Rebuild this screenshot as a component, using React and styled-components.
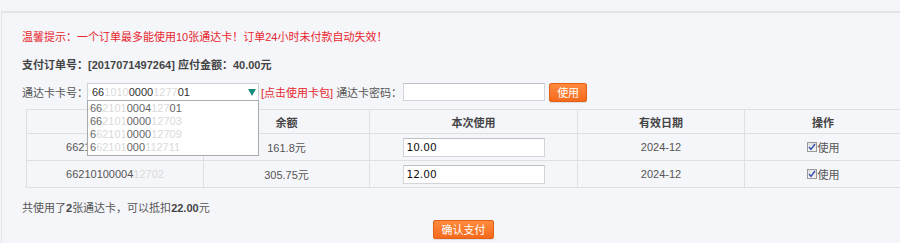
import React from "react";
import styled, { createGlobalStyle } from "styled-components";

const Global = createGlobalStyle`
  html, body { margin: 0; padding: 0; background: #f5f6fa; overflow: hidden; }
  body { font-family: "Liberation Sans", "Noto Sans CJK SC", sans-serif; font-size: 11px; color: #555; }
`;

const Page = styled.div`
  width: 900px;
  height: 243px;
  padding-top: 11px;
  box-sizing: border-box;
  overflow: hidden;
`;

const Panel = styled.div`
  margin-left: 1px;
  width: 960px;
  height: 240px;
  border-top: 2px solid #e3e4e8;
  border-left: 1px solid #e3e4e8;
  padding: 14px 0 0 20px;
  box-sizing: border-box;
`;

const Notice = styled.div`
  color: #e8262d;
  line-height: 20px;
`;

const OrderLine = styled.div`
  margin-top: 8px;
  line-height: 20px;
  font-weight: bold;
  color: #444;
`;

const CardRow = styled.div`
  margin-top: 8px;
  display: flex;
  align-items: center;
  height: 18px;
  position: relative;
  z-index: 2;
`;

const Label = styled.span`
  color: #555;
  white-space: nowrap;
  margin-left: ${(p) => p.$ml || 0}px;
`;

const SelectBox = styled.div`
  position: relative;
  margin-left: -1px;
  width: 172px;
  height: 18px;
  box-sizing: border-box;
  background: #fff;
  border: 1px solid #cfd0d4;
  display: flex;
  align-items: center;
  padding-left: 4px;
  color: #333;
`;

const Arrow = styled.span`
  position: absolute;
  right: 2px;
  top: 5px;
  width: 0;
  height: 0;
  border-left: 4px solid transparent;
  border-right: 4px solid transparent;
  border-top: 7px solid #1b8b80;
`;

const Faint = styled.span`
  color: #dadada;
`;

const Dropdown = styled.div`
  position: absolute;
  left: -1px;
  top: 16px;
  width: 172px;
  height: 56px;
  box-sizing: border-box;
  background: #fff;
  border: 1px solid #a9aaae;
  padding: 1px 0 0 2px;
  overflow: hidden;
`;

const DropItem = styled.div`
  line-height: 13px;
  color: #666;
`;

const WalletLink = styled.span`
  color: #e8262d;
  margin-left: 2px;
  white-space: nowrap;
`;

const TextBox = styled.div`
  width: ${(p) => p.$w}px;
  height: ${(p) => p.$h}px;
  box-sizing: border-box;
  background: #fff;
  border: 1px solid #d4d5d9;
  border-top-color: #bfc0c4;
  margin-left: ${(p) => p.$ml || 0}px;
  display: flex;
  align-items: center;
  padding-left: 3px;
  font-family: "DejaVu Sans", sans-serif;
  font-size: 10.5px;
  color: #111;
`;

const OrangeButton = styled.button`
  width: ${(p) => p.$w}px;
  height: 19px;
  margin-left: ${(p) => p.$ml || 0}px;
  padding: 0;
  border: 1px solid #e35f14;
  border-radius: 2px;
  background: linear-gradient(#ff8a3d, #f56a1c);
  color: #fff;
  font-family: "Noto Sans CJK SC", sans-serif;
  font-size: 11px;
  line-height: 17px;
  box-shadow: 0 1px 1px rgba(0,0,0,0.1);
`;

const Table = styled.table`
  margin: 8px 0 0 4px;
  width: 875px;
  border-collapse: collapse;
  table-layout: fixed;
  position: relative;
  z-index: 1;
`;

const Th = styled.th`
  height: 23px;
  border: 1px solid #dedfe3;
  font-weight: bold;
  color: #444;
  font-size: 11px;
  text-align: center;
  padding: 0;
`;

const Td = styled.td`
  height: 26px;
  border: 1px solid #dedfe3;
  text-align: center;
  color: #555;
  padding: 0;
`;

const CellInner = styled.div`
  display: flex;
  justify-content: center;
  align-items: center;
`;

const CheckBox = styled.span`
  width: 10px;
  height: 10px;
  box-sizing: border-box;
  border: 1px solid #9a9a9a;
  background: linear-gradient(#e2e2e2, #f4f4f4);
  display: inline-flex;
  align-items: center;
  justify-content: center;
  margin-right: 1px;
`;

const Summary = styled.div`
  margin-top: 10px;
  line-height: 20px;
  color: #555;
  b { color: #444; }
`;

const ButtonRow = styled.div`
  margin-top: 2px;
  padding-left: 411px;
`;

const cards = [
  { no: ["6621", "010000412701"], bal: "161.8元", use: "10.00" },
  { no: ["66210100004", "12702"], bal: "305.75元", use: "12.00" },
];

const Check = () => (
  <CheckBox>
    <svg width="8" height="8" viewBox="0 0 8 8">
      <path d="M1 4 L3 6.5 L7 1" fill="none" stroke="#2b4db0" strokeWidth="1.3" />
    </svg>
  </CheckBox>
);

export default function App() {
  return (
    <Page>
      <Global />
      <Panel>
        <Notice>温馨提示：一个订单最多能使用10张通达卡！订单24小时未付款自动失效！</Notice>
        <OrderLine>支付订单号：[2017071497264] 应付金额：40.00元</OrderLine>
        <CardRow>
          <Label>通达卡卡号：</Label>
          <SelectBox>
            66<Faint>1010</Faint>0000<Faint>1277</Faint>01
            <Arrow />
            <Dropdown>
              <DropItem>66<Faint>2101</Faint>0004<Faint>127</Faint>01</DropItem>
              <DropItem>66<Faint>2101</Faint>0000<Faint>12703</Faint></DropItem>
              <DropItem>6<Faint>62101</Faint>0000<Faint>12709</Faint></DropItem>
              <DropItem>6<Faint>62101</Faint>000<Faint>112711</Faint></DropItem>
            </Dropdown>
          </SelectBox>
          <WalletLink>[点击使用卡包]</WalletLink>
          <Label $ml={3}>通达卡密码：</Label>
          <TextBox $w={142} $h={18} $ml={1} />
          <OrangeButton $w={38} $ml={4}>使用</OrangeButton>
        </CardRow>
        <Table>
          <colgroup>
            <col style={{ width: 177 }} />
            <col style={{ width: 166 }} />
            <col style={{ width: 208 }} />
            <col style={{ width: 167 }} />
            <col style={{ width: 157 }} />
          </colgroup>
          <thead>
            <tr>
              <Th />
              <Th>余额</Th>
              <Th>本次使用</Th>
              <Th>有效日期</Th>
              <Th>操作</Th>
            </tr>
          </thead>
          <tbody>
            {cards.map((c, i) => (
              <tr key={i}>
                <Td>
                  {c.no[0]}
                  <Faint>{c.no[1]}</Faint>
                </Td>
                <Td>{c.bal}</Td>
                <Td>
                  <CellInner>
                    <TextBox $w={142} $h={19}>{c.use}</TextBox>
                  </CellInner>
                </Td>
                <Td>2024-12</Td>
                <Td>
                  <CellInner>
                    <Check />使用
                  </CellInner>
                </Td>
              </tr>
            ))}
          </tbody>
        </Table>
        <Summary>
          共使用了<b>2</b>张通达卡，可以抵扣<b>22.00</b>元
        </Summary>
        <ButtonRow>
          <OrangeButton $w={61}>确认支付</OrangeButton>
        </ButtonRow>
      </Panel>
    </Page>
  );
}
